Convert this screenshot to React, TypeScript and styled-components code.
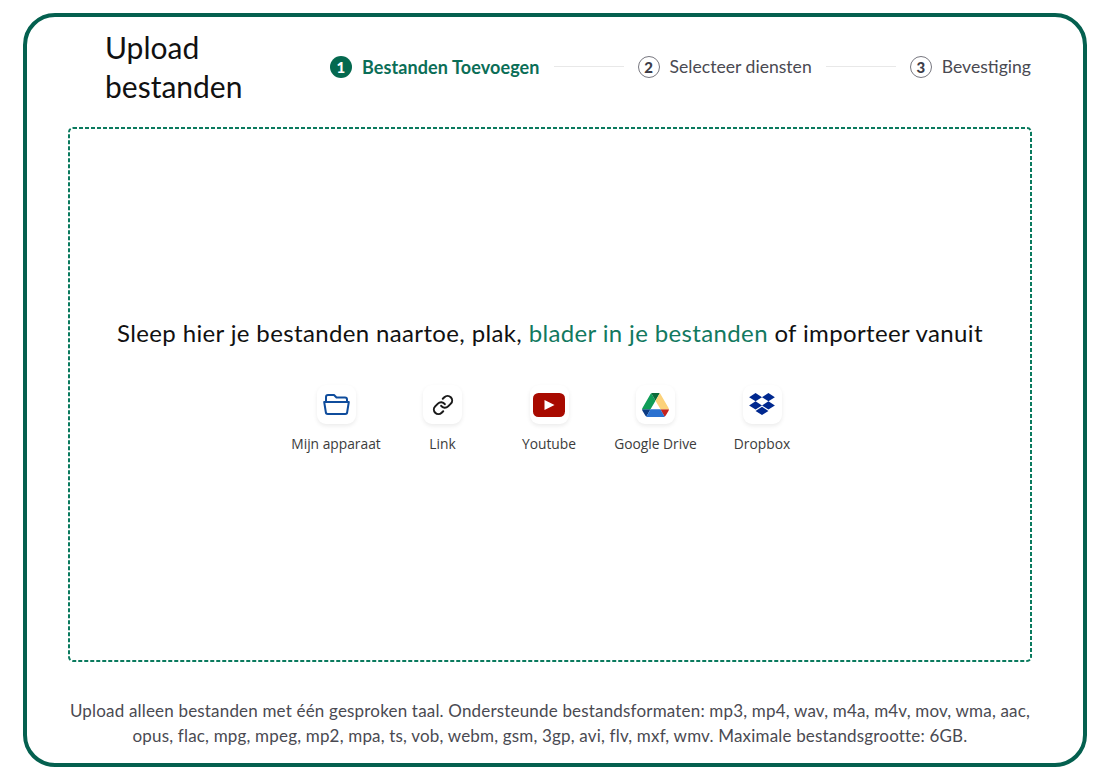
import React from "react";
import styled, { createGlobalStyle } from "styled-components";
import { Link } from "lucide-react";

const GlobalStyle = createGlobalStyle`
  html, body {
    margin: 0;
    padding: 0;
    background: #fff;
  }
  body {
    font-family: "Lato", "Liberation Sans", sans-serif;
  }
`;

const Page = styled.div`
  width: 1110px;
  height: 780px;
  box-sizing: border-box;
  padding: 13px 23px;
`;

const Frame = styled.div`
  width: 1064px;
  height: 754px;
  box-sizing: border-box;
  border: 4px solid #04604f;
  border-radius: 32px;
  padding: 12px 52px 0 41px;
  display: flex;
  flex-direction: column;
`;

const Header = styled.div`
  display: flex;
  align-items: center;
  justify-content: space-between;
  height: 82px;
  padding-left: 37px;
  margin-bottom: 16px;
`;

const Title = styled.h1`
  margin: -6px 0 0;
  width: 190px;
  font-size: 30px;
  line-height: 39px;
  font-weight: 400;
  color: #111;
`;

const Stepper = styled.div`
  display: flex;
  align-items: center;
  margin-top: -7px;
`;

const Step = styled.div`
  display: flex;
  align-items: center;
  gap: 10px;
`;

const Badge = styled.span<{ $active?: boolean }>`
  width: 22px;
  height: 22px;
  box-sizing: border-box;
  border-radius: 50%;
  display: flex;
  align-items: center;
  justify-content: center;
  font-size: 15px;
  font-weight: 900;
  color: ${(p) => (p.$active ? "#fff" : "#3d3d48")};
  background: ${(p) => (p.$active ? "#04694f" : "#fff")};
  border: ${(p) => (p.$active ? "none" : "1px solid #77777f")};
`;

const StepLabel = styled.span<{ $active?: boolean }>`
  font-size: ${(p) => (p.$active ? "18px" : "17.6px")};
  letter-spacing: ${(p) => (p.$active ? "0.1px" : "0")};
  font-weight: ${(p) => (p.$active ? 700 : 400)};
  color: ${(p) => (p.$active ? "#0b6e57" : "#4a4a52")};
`;

const Line = styled.span`
  width: 70px;
  height: 1.5px;
  background: #e8e8e8;
  margin: 0 14px;
`;

// drawn as a background so the dash length can be set, a css dashed border is too coarse
const DropZone = styled.div`
  width: 964px;
  height: 535px;
  box-sizing: border-box;
  background-image: url("data:image/svg+xml,%3Csvg xmlns='http://www.w3.org/2000/svg' width='964' height='535'%3E%3Crect x='1' y='1' width='962' height='533' rx='4' fill='none' stroke='%230a7a5e' stroke-width='2' stroke-dasharray='4 2'/%3E%3C/svg%3E");
  display: flex;
  flex-direction: column;
  align-items: center;
  padding-top: 190px;
`;

const Prompt = styled.p`
  margin: 0 0 36px;
  font-size: 24px;
  letter-spacing: 0.36px;
  line-height: 32px;
  color: #111;
  white-space: nowrap;
`;

const Browse = styled.span`
  color: #12795f;
`;

const Sources = styled.div`
  display: flex;
  margin-right: 2px;
`;

const Source = styled.div`
  width: 106.5px;
  display: flex;
  flex-direction: column;
  align-items: center;
  gap: 10px;
`;

const Tile = styled.div`
  width: 39px;
  height: 39px;
  border-radius: 9px;
  background: #fff;
  box-shadow: 0 2px 4px rgba(0, 0, 0, 0.08);
  display: flex;
  align-items: center;
  justify-content: center;
`;

const SourceLabel = styled.span`
  font-family: "Open Sans", sans-serif;
  font-size: 13.8px;
  line-height: 20px;
  color: #3c3c3c;
  white-space: nowrap;
`;

const Note = styled.p`
  margin: 36px 0 0;
  width: 964px;
  text-align: center;
  font-size: 17px;
  letter-spacing: 0.18px;
  line-height: 25px;
  color: #4a4a52;
`;

const FolderIcon = () => (
  <svg width="27" height="21" viewBox="0 0 27 21" fill="none" stroke="#0f4c9c" strokeWidth="2" strokeLinejoin="round">
    <path d="M3 8 V3 a2 2 0 0 1 2-2 h6 l2.5 2.5 h8.5 a2 2 0 0 1 2 2 V8" />
    <path d="M1.2 8 h24.6 l-1.6 10 a2 2 0 0 1-2 2 H4.8 a2 2 0 0 1-2-2 Z" />
  </svg>
);

const YoutubeIcon = () => (
  <svg width="32" height="24" viewBox="0 0 32 24">
    <rect width="32" height="24" rx="5.5" fill="#a80a00" />
    <path d="M11.5 7 L21.5 12 L11.5 17 Z" fill="#fff" />
  </svg>
);

const DriveIcon = () => (
  <svg width="27" height="24" viewBox="0 0 87.3 78">
    <path d="m6.6 66.85 3.85 6.65c.8 1.4 1.95 2.5 3.3 3.3l13.75-23.8h-27.5c0 1.55.4 3.1 1.2 4.5z" fill="#0b3a82" />
    <path d="m43.65 25-13.75-23.8c-1.35.8-2.5 1.9-3.3 3.3l-25.4 44a9.06 9.06 0 0 0 -1.2 4.5h27.5z" fill="#0f9d58" />
    <path d="m73.55 76.8c1.35-.8 2.5-1.9 3.3-3.3l1.6-2.75 7.65-13.25c.8-1.4 1.2-2.95 1.2-4.5h-27.502l5.852 11.5z" fill="#c5221f" />
    <path d="m43.65 25 13.75-23.8c-1.35-.8-2.9-1.2-4.5-1.2h-18.5c-1.6 0-3.15.45-4.5 1.2z" fill="#0b6b3a" />
    <path d="m59.8 53h-32.3l-13.75 23.8c1.35.8 2.9 1.2 4.5 1.2h50.8c1.6 0 3.15-.45 4.5-1.2z" fill="#2a71d0" />
    <path d="m73.4 26.5-12.7-22c-.8-1.4-1.95-2.5-3.3-3.3l-13.75 23.8 16.15 28h27.45c0-1.55-.4-3.1-1.2-4.5z" fill="#fcd27a" />
  </svg>
);

const DropboxIcon = () => (
  <svg width="26" height="23" viewBox="0 0 28 25">
    <path
      d="M7 0 L14 4.5 L7 9 L0 4.5 Z M21 0 L28 4.5 L21 9 L14 4.5 Z M7 9 L14 13.5 L7 18 L0 13.5 Z M21 9 L28 13.5 L21 18 L14 13.5 Z M7 19.5 L14 15 L21 19.5 L14 24 Z"
      fill="#00288f"
    />
  </svg>
);

const sources = [
  { label: "Mijn apparaat", icon: <FolderIcon /> },
  { label: "Link", icon: <Link size={22} color="#1a1a1a" strokeWidth={2.2} /> },
  { label: "Youtube", icon: <YoutubeIcon /> },
  { label: "Google Drive", icon: <DriveIcon /> },
  { label: "Dropbox", icon: <DropboxIcon /> },
];

const App = () => {
  return (
    <Page>
      <GlobalStyle />
      <Frame>
        <Header>
          <Title>Upload bestanden</Title>
          <Stepper>
            <Step>
              <Badge $active>1</Badge>
              <StepLabel $active>Bestanden Toevoegen</StepLabel>
            </Step>
            <Line />
            <Step>
              <Badge>2</Badge>
              <StepLabel>Selecteer diensten</StepLabel>
            </Step>
            <Line />
            <Step>
              <Badge>3</Badge>
              <StepLabel>Bevestiging</StepLabel>
            </Step>
          </Stepper>
        </Header>
        <DropZone>
          <Prompt>
            Sleep hier je bestanden naartoe, plak, <Browse>blader in je bestanden</Browse> of importeer vanuit
          </Prompt>
          <Sources>
            {sources.map((s) => (
              <Source key={s.label}>
                <Tile>{s.icon}</Tile>
                <SourceLabel>{s.label}</SourceLabel>
              </Source>
            ))}
          </Sources>
        </DropZone>
        <Note>
          Upload alleen bestanden met één gesproken taal. Ondersteunde bestandsformaten: mp3, mp4, wav, m4a, m4v, mov, wma, aac, opus, flac, mpg, mpeg, mp2, mpa, ts, vob, webm, gsm, 3gp, avi, flv, mxf, wmv. Maximale bestandsgrootte: 6GB.
        </Note>
      </Frame>
    </Page>
  );
};

export default App;
